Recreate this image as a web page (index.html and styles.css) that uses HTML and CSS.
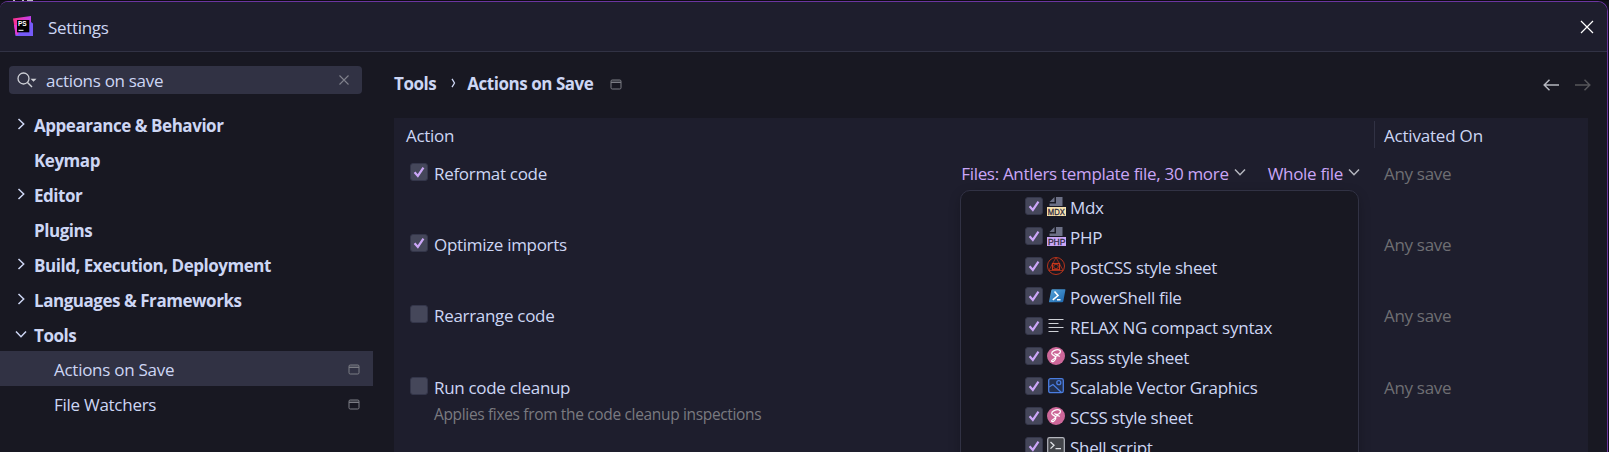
FILE: index.html
```html
<!DOCTYPE html>
<html lang="en">
<head>
<meta charset="utf-8">
<title>Settings</title>
<link rel="stylesheet" href="styles.css">
</head>
<body>
<svg class="defs" width="0" height="0">
  <symbol id="right" viewBox="0 0 16 16"><path d="M5.5 3 L10.7 8 L5.5 13" fill="none" stroke="currentColor" stroke-width="1.5"/></symbol>
  <symbol id="down" viewBox="0 0 16 16"><path d="M3 5.5 L8 10.7 L13 5.5" fill="none" stroke="currentColor" stroke-width="1.5"/></symbol>
  <symbol id="project" viewBox="0 0 12 11"><rect x="1" y="1" width="10" height="9" rx="1.2" fill="none" stroke="currentColor"/><path d="M1 1.500h10v2H1z" fill="currentColor" opacity=".4"/><path d="M1 3.500h10" stroke="currentColor"/></symbol>
  <symbol id="check" viewBox="0 0 18 18"><path d="M4 9.200 L7.700 13.400 L14 4.200" fill="none" stroke="#cba6f7" stroke-width="2.500"/></symbol>
  <symbol id="sass" viewBox="0 0 18 18"><circle cx="9" cy="9" r="9" fill="#cd6799"/><path d="M4.4 14.2c.5-2 3.700-2 4-4.200C8.500 8.600 5 8.700 4.700 6.500 4.500 4.200 9 2.300 11.800 2.800c2.300.4 2.200 3-.3 4.200-2 .9-3.900.3-3.600-.8M8.300 9.800c1.500-1.500 4.200-1.500 4.100-.1M4.400 14.200c1 1.200 3.700-.4 4.300-2.500.3-1 .1-1.500-.3-2" fill="none" stroke="#fff" stroke-width="1.200"/></symbol>
</svg>
<div class="backdrop"></div>
<div class="window">
  <header class="titlebar">
    <svg class="logo" viewBox="0 0 20 20" width="20" height="20">
      <defs><linearGradient id="lg" x1="0" y1="0" x2="1" y2="0"><stop offset="0" stop-color="#ff318c"/><stop offset="1" stop-color="#c040f0"/></linearGradient></defs>
      <path d="M0 2.500 L18 0 L18 14 L2 14z" fill="url(#lg)"/><path d="M18 6 L20 7.500 V20 H2.500 L2 16z" fill="#765af8"/><path d="M1 9 L7 9 L5 19 L2.500 18.500z" fill="#e33bd0"/>
      <rect x="4" y="4" width="12.300" height="12.300" fill="#000"/><path d="M5.500 14.300h5" stroke="#fff" stroke-width="1"/>
      <text x="5" y="10" class="logo-text">PS</text>
    </svg>
    <h1 class="title">Settings</h1>
    <svg class="close" viewBox="0 0 14 14" width="14" height="14"><path d="M1 1 L13 13 M13 1 L1 13" stroke="#fff" stroke-width="1.200"/></svg>
  </header>
  <div class="content">
    <aside class="sidebar">
      <div class="search">
        <svg class="lens" viewBox="0 0 20 16" width="20" height="16"><circle cx="6.500" cy="6.500" r="5.500" fill="none" stroke="#ced0d6" stroke-width="1.300"/><path d="M10.500 10.500 L15 15" stroke="#ced0d6" stroke-width="1.400"/><path d="M13.500 6.700h6L16.500 9.700z" fill="#ced0d6"/></svg>
        <span class="query">actions on save</span>
        <svg class="clear" viewBox="0 0 10 10" width="10" height="10"><path d="M.5 .5 L9.500 9.500 M9.500 .5 L.5 9.500" stroke="#7f818b" stroke-width="1.100"/></svg>
      </div>
      <ul class="tree">
        <li class="node"><svg class="arrow"><use href="#right"/></svg><span>Appearance &amp; Behavior</span></li>
        <li class="node leaf"><span>Keymap</span></li>
        <li class="node"><svg class="arrow"><use href="#right"/></svg><span>Editor</span></li>
        <li class="node leaf"><span>Plugins</span></li>
        <li class="node"><svg class="arrow"><use href="#right"/></svg><span>Build, Execution, Deployment</span></li>
        <li class="node"><svg class="arrow"><use href="#right"/></svg><span>Languages &amp; Frameworks</span></li>
        <li class="node"><svg class="arrow"><use href="#down"/></svg><span>Tools</span></li>
        <li class="node child selected"><span>Actions on Save</span><svg class="badge"><use href="#project"/></svg></li>
        <li class="node child"><span>File Watchers</span><svg class="badge"><use href="#project"/></svg></li>
      </ul>
    </aside>
    <main class="main">
      <nav class="crumbs">
        <span>Tools</span>
        <svg class="sep" viewBox="0 0 5 10" width="5" height="10"><path d="M1 .8 L3.500 5 L1 9.200" fill="none" stroke="#cdd6f4" stroke-width="1.300"/></svg>
        <span>Actions on Save</span>
        <svg class="badge"><use href="#project"/></svg>
        <svg class="nav" viewBox="0 0 48 12" width="48" height="12"><path d="M1 6h15M6.500 .7 L1.200 6 L6.500 11.300" fill="none" stroke="#b4b6be" stroke-width="1.500"/><path d="M32 6h15M41.500 .7 L46.800 6 L41.500 11.300" fill="none" stroke="#55555a" stroke-width="1.500"/></svg>
      </nav>
      <section class="table">
        <div class="row head"><span class="cell">Action</span><span class="activated">Activated On</span></div>
        <div class="row">
          <div class="cell"><svg class="box"><use href="#check"/></svg><span>Reformat code</span>
            <div class="links"><span class="files">Files: Antlers template file, 30 more</span><svg class="drop"><use href="#down"/></svg><span class="whole">Whole file</span><svg class="drop"><use href="#down"/></svg></div>
          </div><span class="when">Any save</span>
        </div>
        <div class="row"><div class="cell"><svg class="box"><use href="#check"/></svg><span>Optimize imports</span></div><span class="when">Any save</span></div>
        <div class="row tall"><div class="cell"><svg class="box"></svg><span>Rearrange code</span></div><span class="when">Any save</span></div>
        <div class="row"><div class="cell"><svg class="box"></svg><div><span>Run code cleanup</span><p class="hint">Applies fixes from the code cleanup inspections</p></div></div><span class="when">Any save</span></div>
      </section>
    </main>
  </div>
  <ul class="popup">
    <li><svg class="box"><use href="#check"/></svg><svg class="icon" viewBox="0 0 19 19"><path d="M9 0h6.500v9H2.500V6.500H9z" fill="#6c7086"/><path d="M7.500 0v5h-5z" fill="#6c7086"/><path d="M0 10h19v9H0z" fill="#f9e2af"/><text x=".8" y="17.600" class="tag" textLength="17" lengthAdjust="spacingAndGlyphs">MDX</text></svg><span>Mdx</span></li>
    <li><svg class="box"><use href="#check"/></svg><svg class="icon" viewBox="0 0 19 19"><path d="M9 0h6.500v9H2.500V6.500H9z" fill="#6c7086"/><path d="M7.500 0v5h-5z" fill="#6c7086"/><path d="M0 10h19v9H0z" fill="#cba6f7"/><text x=".9" y="17.600" class="tag" textLength="17.500" lengthAdjust="spacingAndGlyphs">PHP</text></svg><span>PHP</span></li>
    <li><svg class="box"><use href="#check"/></svg><svg class="icon" viewBox="0 0 19 19"><g fill="none" stroke="#c8371b"><circle cx="9" cy="9" r="8.500" stroke-width=".9"/><path d="M9 .5 L1.800 13.500 H16.200z" stroke-width=".7"/><rect x="5.500" y="6.500" width="7" height="6.200" stroke-width="1.200"/><circle cx="9" cy="9.500" r="2.300" stroke-width=".8"/></g></svg><span>PostCSS style sheet</span></li>
    <li><svg class="box"><use href="#check"/></svg><svg class="icon" viewBox="0 0 19 19"><defs><linearGradient id="ps" x1="0" y1="0" x2="1" y2="1"><stop offset="0" stop-color="#56a5db"/><stop offset="1" stop-color="#1b65ad"/></linearGradient></defs><path d="M5.500 2.300h12.300q.8 0 .6.800L16.300 14.300q-.3 1-1.200 1H2.700q-.9 0-.7-.9L4.300 3.300q.3-1 1.200-1z" fill="url(#ps)"/><path d="M7.500 4.500 L11 8.500 L5.800 12.800M10 12.800h3.500" fill="none" stroke="#fff" stroke-width="1.600"/></svg><span>PowerShell file</span></li>
    <li><svg class="box"><use href="#check"/></svg><svg class="icon" viewBox="0 0 19 19"><path d="M1.500 2.500h15M1.500 6.500h10M1.500 10.500h15M1.500 14.500h10" stroke="#ced0d6" stroke-width="1.200"/></svg><span class="relax">RELAX NG compact syntax</span></li>
    <li><svg class="box"><use href="#check"/></svg><svg class="icon" viewBox="0 0 19 19"><use href="#sass" width="18" height="18"/></svg><span>Sass style sheet</span></li>
    <li><svg class="box"><use href="#check"/></svg><svg class="icon" viewBox="0 0 19 19"><g fill="none" stroke="#4a7de0" stroke-width="1.300"><rect x="1.700" y="1.700" width="14.600" height="14" rx="1.800" fill="#22304f"/><circle cx="11.800" cy="5.700" r="2"/><path d="M2 10 L6 7.500 L14.500 15.500"/></g></svg><span>Scalable Vector Graphics</span></li>
    <li><svg class="box"><use href="#check"/></svg><svg class="icon" viewBox="0 0 19 19"><use href="#sass" width="18" height="18"/></svg><span>SCSS style sheet</span></li>
    <li><svg class="box"><use href="#check"/></svg><svg class="icon" viewBox="0 0 19 19"><rect x=".7" y=".7" width="16.600" height="16.600" rx="1.800" fill="#43454a" stroke="#b4b6be" stroke-width="1.200"/><path d="M3.500 5 L7 8.300 L3.500 11.600M8.500 11.600h5.500" fill="none" stroke="#dfe1e5" stroke-width="1.300"/></svg><span>Shell script</span></li>
  </ul>
</div>
</body>
</html>
```
FILE: styles.css
```css
* { box-sizing: border-box; }
body { margin: 0; width: 1609px; height: 452px; overflow: hidden; background: #12121a; font-family: "Open Sans", "Noto Sans", sans-serif; font-size: 17px; letter-spacing: -.31px; color: #cdd6f4; }
h1, p, ul { margin: 0; padding: 0; font-weight: 400; list-style: none; }
svg { flex: none; display: block; }
span { white-space: nowrap; }
.defs { position: absolute; }
.backdrop { height: 1px; background: linear-gradient(90deg, transparent 13px, #b8b8c0 13px 15px, transparent 15px 22px, #b8b8c0 22px 24px, transparent 24px 27px, #b8b8c0 27px 33px, transparent 33px) #0d0c12; }
.window { position: relative; width: 1608px; height: 460px; border: solid #6b35a0; border-width: 1px 1px 0 0; border-radius: 8px 10px 0 0; background: #181822; overflow: hidden; }
.titlebar { display: flex; align-items: center; height: 50px; padding: 0 13px; background: #1e1e2d; border-bottom: 1px solid #313244; }
.title { margin-left: 15px; font-size: 17px; line-height: 24px; padding-top: 3px; }
.logo { margin-top: -1px; }
.logo-text { font: bold 6.500px "Liberation Sans", sans-serif; letter-spacing: 0; fill: #fff; }
.close { margin-left: auto; }
.content { display: flex; height: 410px; }
.sidebar { width: 394px; }
.search { display: flex; align-items: center; width: 353px; height: 28px; margin: 14px 0 0 9px; padding: 0 13px 0 8px; border-radius: 4px; background: #313244; }
.query { margin-left: 9px; padding-top: 2px; line-height: 24px; }
.clear { margin-left: auto; }
.tree { margin-top: 12px; width: 373px; font-weight: 700; letter-spacing: -.46px; }
.node { display: flex; align-items: center; height: 35px; padding: 3px 12px 0 13px; }
.arrow { width: 16px; height: 16px; margin: -3px 5px 0 0; }
.leaf { padding-left: 34px; }
.child { padding: 1px 12px 0 54px; font-weight: 400; letter-spacing: -.27px; }
.selected { background: #313244; }
.badge { width: 12px; height: 11px; color: #7b7c84; }
.node .badge { margin: 0 1px 0 auto; }
.main { width: 1194px; }
.crumbs { display: flex; align-items: center; height: 66px; padding-bottom: 3px; font-weight: 700; letter-spacing: -.46px; }
.crumbs .sep { margin: -1px 11px 0 15px; }
.crumbs .badge { margin: 1px 0 0 17px; }
.nav { margin: 2px -3px 0 auto; }
.table { height: 344px; background: #1e1e2d; }
.row { display: flex; height: 71px; line-height: 24px; }
.row.tall { height: 72px; }
.row.head { height: 44px; padding-top: 3px; }
.head .cell { padding: 3px 0 0 12px; }
.cell { display: flex; align-items: flex-start; width: 980px; padding-left: 16px; }
.activated { height: 27px; padding: 3px 0 0 9px; border-left: 1px solid #313244; letter-spacing: -.2px; }
.box { width: 18px; height: 18px; border-radius: 3px; border: 1px solid #34364a; background: #45475a; }
.cell .box { margin: 1px 6.500px 0 -.5px; }
.when { margin-left: 10px; color: #6e6e73; }
.hint { font-size: 15.500px; line-height: 28px; letter-spacing: -.34px; color: #7a7a80; }
.links { display: flex; margin-left: auto; padding-right: 12px; color: #cba6f7; }
.drop { width: 16px; height: 16px; margin: 2px 0 0 3px; color: #b4b6be; }
.whole { margin-left: 20px; }
.popup { position: absolute; left: 960px; top: 188px; width: 399px; height: 290px; padding-top: 3px; border: 1px solid #313244; border-radius: 10px; background: #181822; box-shadow: 0 4px 12px rgba(0,0,0,.22); }
.popup li { display: flex; height: 30px; padding-left: 64px; line-height: 24px; }
.popup .box { margin: 3px 4px 0 0; }
.popup .icon { width: 19px; height: 19px; margin: 3px 4px 0 0; }
.popup span { padding-top: 2px; }
.popup .relax { letter-spacing: -.23px; }
.tag { font: 8.500px "Liberation Sans", sans-serif; letter-spacing: 0; fill: #302d41; stroke: #302d41; stroke-width: .3px; }
```
